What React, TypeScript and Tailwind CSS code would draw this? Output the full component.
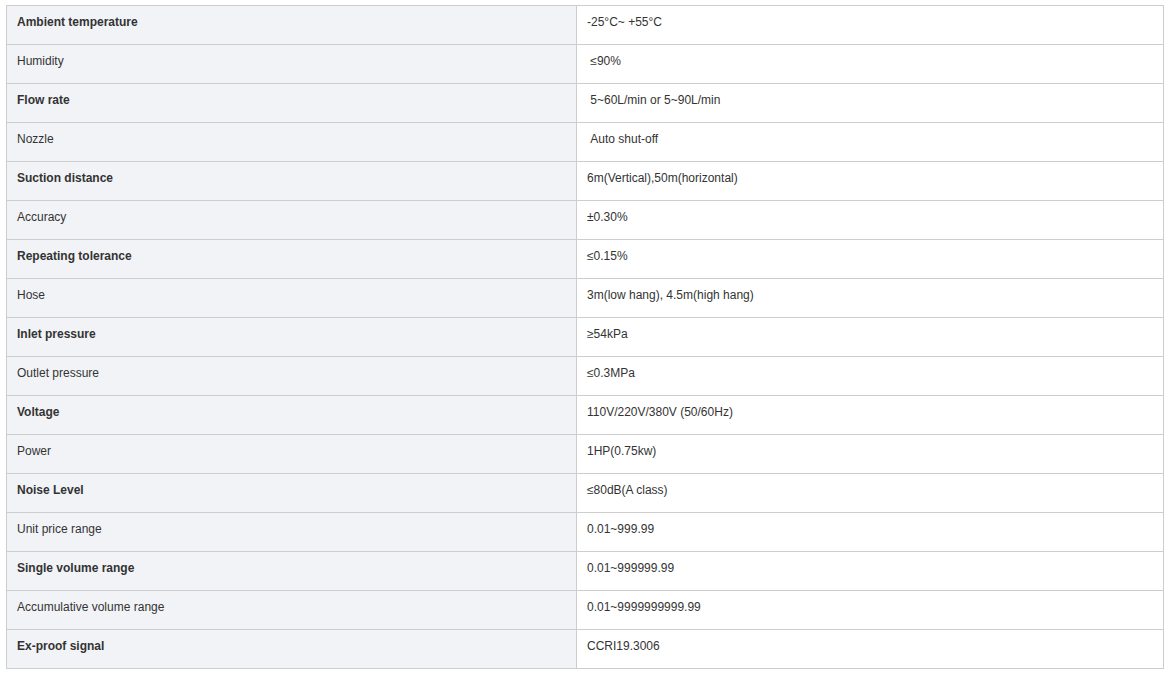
import React from 'react';

type Row = { label: string; value: string; bold: boolean };

const rows: Row[] = [
  { label: 'Ambient temperature', value: '-25°C~ +55°C', bold: true },
  { label: 'Humidity', value: '\u00a0≤90%', bold: false },
  { label: 'Flow rate', value: '\u00a05~60L/min or 5~90L/min', bold: true },
  { label: 'Nozzle', value: '\u00a0Auto shut-off', bold: false },
  { label: 'Suction distance', value: '6m(Vertical),50m(horizontal)', bold: true },
  { label: 'Accuracy', value: '±0.30%', bold: false },
  { label: 'Repeating tolerance', value: '≤0.15%', bold: true },
  { label: 'Hose', value: '3m(low hang), 4.5m(high hang)', bold: false },
  { label: 'Inlet pressure', value: '≥54kPa', bold: true },
  { label: 'Outlet pressure', value: '≤0.3MPa', bold: false },
  { label: 'Voltage', value: '110V/220V/380V (50/60Hz)', bold: true },
  { label: 'Power', value: '1HP(0.75kw)', bold: false },
  { label: 'Noise Level', value: '≤80dB(A class)', bold: true },
  { label: 'Unit price range', value: '0.01~999.99', bold: false },
  { label: 'Single volume range', value: '0.01~999999.99', bold: true },
  { label: 'Accumulative volume range', value: '0.01~9999999999.99', bold: false },
  { label: 'Ex-proof signal', value: 'CCRI19.3006', bold: true },
];

const App = () => {
  return (
    <div className="min-h-screen bg-white pl-[6px] pt-[5px] font-['Liberation_Sans',Arial,sans-serif] text-[12px] text-[#333]">
      <table className="w-[1158px] border-collapse">
        <tbody>
          {rows.map((row) => (
            <tr key={row.label}>
              <td
                className={`h-[39px] w-[570px] border border-[#cdcdcd] bg-[#f2f3f7] px-[10px] pt-[7px] pb-[12px] align-top leading-[18px] ${row.bold ? 'font-bold' : ''}`}
              >
                {row.label}
              </td>
              <td className="h-[39px] border border-[#cdcdcd] bg-white px-[10px] pt-[7px] pb-[12px] align-top leading-[18px]">
                {row.value}
              </td>
            </tr>
          ))}
        </tbody>
      </table>
    </div>
  );
};

export default App;
